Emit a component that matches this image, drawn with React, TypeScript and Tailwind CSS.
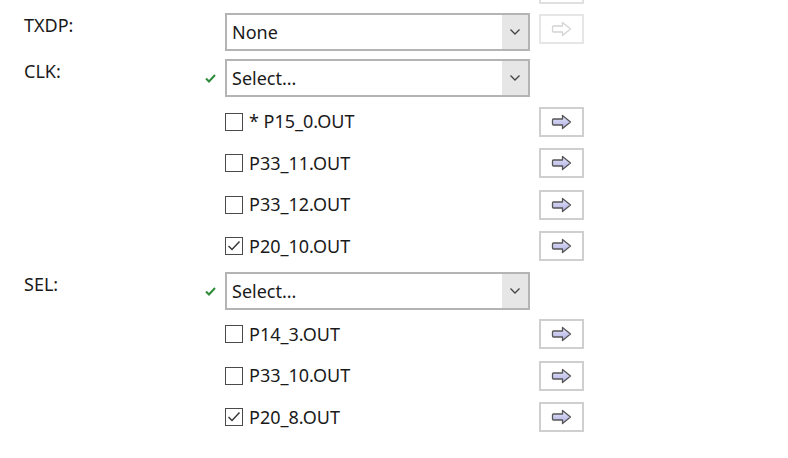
import React from "react";

const font = { fontFamily: '"Noto Sans", "Open Sans", sans-serif' };

function Arrow({ disabled }: { disabled?: boolean }) {
  return (
    <svg width="22" height="16" viewBox="0 0 22 16">
      <defs>
        <linearGradient id="ag" x1="0" y1="0" x2="0" y2="1">
          <stop offset="0" stopColor="#e4e4fa" />
          <stop offset="1" stopColor="#b0b0e4" />
        </linearGradient>
      </defs>
      <path
        d="M2.5 5 H11.5 V1.5 L19.5 8 L11.5 14.5 V11 H2.5 Q1.5 11 1.5 10 V6 Q1.5 5 2.5 5 Z"
        fill={disabled ? "#ffffff" : "url(#ag)"}
        stroke={disabled ? "#d4d4d4" : "#555555"}
        strokeWidth="1.3"
        strokeLinejoin="round"
      />
    </svg>
  );
}

function ArrowButton({ disabled }: { disabled?: boolean }) {
  return (
    <div
      className={`flex h-[30px] w-[45px] shrink-0 items-center justify-center border-2 bg-white ${
        disabled ? "border-[#e6e6e6]" : "border-[#cfcfcf]"
      }`}
    >
      <Arrow disabled={disabled} />
    </div>
  );
}

function Chevron() {
  return (
    <svg width="12" height="8" viewBox="0 0 12 8">
      <path d="M1.5 1.5 L6 6 L10.5 1.5" fill="none" stroke="#444" strokeWidth="1.3" />
    </svg>
  );
}

function Dropdown({ value }: { value: string }) {
  return (
    <div className="flex h-[38px] w-[305px] shrink-0 border-2 border-[#b4b4b4] bg-white">
      <div className="flex flex-1 items-center pl-[5px] text-[18px] text-[#1a1a1a]">{value}</div>
      <div className="flex w-[26px] items-center justify-center bg-[#e6e6e6]">
        <Chevron />
      </div>
    </div>
  );
}

function GreenCheck() {
  return (
    <svg width="11" height="9" viewBox="0 0 11 9">
      <path d="M1 4.5 L4 7.5 L10 1" fill="none" stroke="#2e8b3a" strokeWidth="2" />
    </svg>
  );
}

function Checkbox({ checked }: { checked?: boolean }) {
  return (
    <div className="flex h-[18px] w-[18px] shrink-0 items-center justify-center border-[1.5px] border-[#4a4a4a] bg-white">
      {checked && (
        <svg width="14" height="12" viewBox="0 0 14 12">
          <path d="M1.5 6 L5 9.5 L12.5 1.5" fill="none" stroke="#333" strokeWidth="1.4" />
        </svg>
      )}
    </div>
  );
}

function SelectRow({
  label,
  value,
  valid,
  button,
}: {
  label: string;
  value: string;
  valid?: boolean;
  button?: boolean;
}) {
  return (
    <div className="flex h-[38px] items-start">
      <div className="flex h-[24px] w-[205px] shrink-0 items-center pl-[24px] text-[18px] text-[#1a1a1a]">
        {label}
      </div>
      <div className="flex h-[38px] w-[20px] shrink-0 items-center">{valid && <GreenCheck />}</div>
      <Dropdown value={value} />
      {button && (
        <div className="ml-[9px] pt-[1px]">
          <ArrowButton disabled />
        </div>
      )}
    </div>
  );
}

function PinRow({ name, checked }: { name: string; checked?: boolean }) {
  return (
    <div className="flex h-[41.5px] items-center">
      <div className="flex w-[539px] shrink-0 items-center gap-[6px] pl-[225px]">
        <Checkbox checked={checked} />
        <span className="whitespace-nowrap text-[18px] text-[#1a1a1a]">{name}</span>
      </div>
      <ArrowButton />
    </div>
  );
}

export default function App() {
  return (
    <div className="h-[458px] w-[788px] overflow-hidden bg-white" style={font}>
      <div className="flex h-[4px] items-end overflow-hidden pl-[539px]">
        <div className="h-[30px] w-[45px] shrink-0 border-2 border-[#e0e0e0]" />
      </div>
      <div className="mt-[9px] flex flex-col">
        <SelectRow label="TXDP:" value="None" button />
        <div className="mt-[8px]">
          <SelectRow label="CLK:" value="Select..." valid />
        </div>
        <div className="mt-[3.75px]">
          <PinRow name="* P15_0.OUT" />
          <PinRow name="P33_11.OUT" />
          <PinRow name="P33_12.OUT" />
          <PinRow name="P20_10.OUT" checked />
        </div>
        <div className="mt-[5.25px]">
          <SelectRow label="SEL:" value="Select..." valid />
        </div>
        <div className="mt-[3.5px]">
          <PinRow name="P14_3.OUT" />
          <PinRow name="P33_10.OUT" />
          <PinRow name="P20_8.OUT" checked />
        </div>
      </div>
    </div>
  );
}
